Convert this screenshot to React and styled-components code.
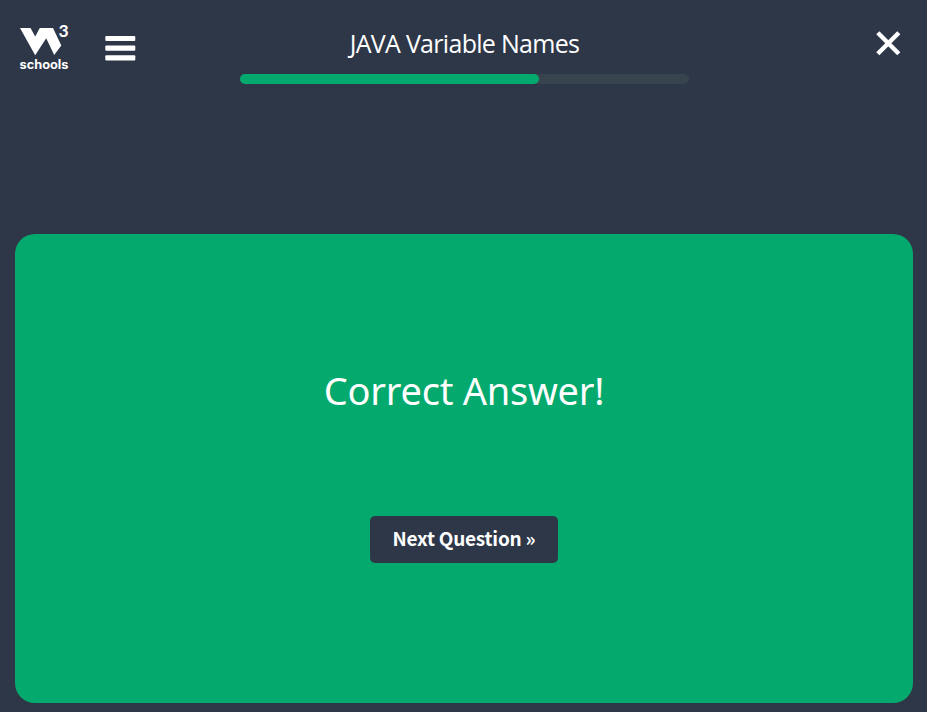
import React from "react";
import styled, { createGlobalStyle } from "styled-components";

const GlobalStyle = createGlobalStyle`
  * { box-sizing: border-box; }
  body { margin: 0; background: #2e3748; overflow: hidden; }
`;

const Page = styled.div`
  display: flex;
  flex-direction: column;
  height: 712px;
  padding: 0 14px 9px 15px;
  color: #fff;
  font-family: "Noto Sans", "Open Sans", sans-serif;
`;

const Header = styled.header`
  display: grid;
  grid-template-columns: 225px 449px 1fr;
  height: 234px;
`;

const Nav = styled.nav`
  display: flex;
  align-items: flex-start;
  padding: 20px 0 0 0;
  gap: 32px;
`;

const Logo = styled.svg`
  display: block;
  width: 58px;
  height: 56px;
`;

const LogoText = styled.text`
  font-family: ${({ $family }) => $family}, sans-serif;
  font-weight: 700;
  font-size: ${({ $size }) => $size}px;
  fill: #fff;
`;

const IconButton = styled.button`
  display: flex;
  padding: 0;
  border: 0;
  background: none;
  color: #fff;
  margin: ${({ $offset }) => $offset};
`;

const Progress = styled.section`
  display: flex;
  flex-direction: column;
  padding-top: 26px;
`;

const Title = styled.h1`
  margin: 0 0 14px;
  height: 34px;
  line-height: 34px;
  font-family: "Open Sans", sans-serif;
  font-size: 25px;
  font-weight: 400;
  letter-spacing: -0.7px;
  text-align: center;
  white-space: nowrap;
`;

const Track = styled.div`
  height: 10px;
  border-radius: 5px;
  background: #38444d;
`;

const Fill = styled.div`
  width: 299px;
  height: 10px;
  border-radius: 5px;
  background: #04aa6d;
`;

const Tools = styled.div`
  display: flex;
  justify-content: flex-end;
  align-items: flex-start;
`;

const ResultCard = styled.main`
  display: flex;
  flex-direction: column;
  align-items: center;
  height: 469px;
  padding-top: 129px;
  border-radius: 20px;
  background: #04aa6d;
`;

const Result = styled.h2`
  margin: 0 0 99px;
  height: 54px;
  line-height: 54px;
  font-size: 38px;
  font-weight: 400;
  letter-spacing: -0.25px;
  white-space: nowrap;
`;

const NextButton = styled.button`
  width: 188px;
  height: 47px;
  padding: 0 0 4px;
  border: 0;
  border-radius: 5px;
  background: #2e3748;
  color: #fff;
  font: 700 19px/43px "Noto Sans CJK SC", sans-serif;
  letter-spacing: -0.23px;
  white-space: nowrap;
`;

export default function App() {
  return (
    <>
      <GlobalStyle />
      <Page>
        <Header>
          <Nav>
            <Logo viewBox="0 0 58 56" aria-label="W3Schools">
              <path
                fill="#fff"
                d="M5 8H15.5L20.2 16.4L24.8 8H38L46.3 25.5L39.2 35.1L31.2 18.3L20.2 35.2Z"
              />
              <LogoText x="43.5" y="17" $size={17.5} $family="Lato">3</LogoText>
              <LogoText x="4.5" y="48.8" $size={12.8} $family="Inter" textLength="49" lengthAdjust="spacing">schools</LogoText>
            </Logo>
            <IconButton aria-label="Menu" $offset="16px 0 0">
              <svg width="31" height="25" viewBox="0 0 31 25" fill="currentColor">
                <rect x="0.3" y="0" width="30" height="5" rx="1" />
                <rect x="0.3" y="9.4" width="30" height="5.4" rx="1" />
                <rect x="0.3" y="19.2" width="30" height="5.2" rx="1" />
              </svg>
            </IconButton>
          </Nav>
          <Progress>
            <Title>JAVA Variable Names</Title>
            <Track><Fill /></Track>
          </Progress>
          <Tools>
            <IconButton aria-label="Close" $offset="30px 11px 0 0">
              <svg width="27" height="27" viewBox="0 0 27 27">
                <path d="M2.8 2.8L23.8 23.8M23.8 2.8L2.8 23.8" stroke="currentColor" strokeWidth="4.4" />
              </svg>
            </IconButton>
          </Tools>
        </Header>
        <ResultCard>
          <Result>Correct Answer!</Result>
          <NextButton>Next Question »</NextButton>
        </ResultCard>
      </Page>
    </>
  );
}
